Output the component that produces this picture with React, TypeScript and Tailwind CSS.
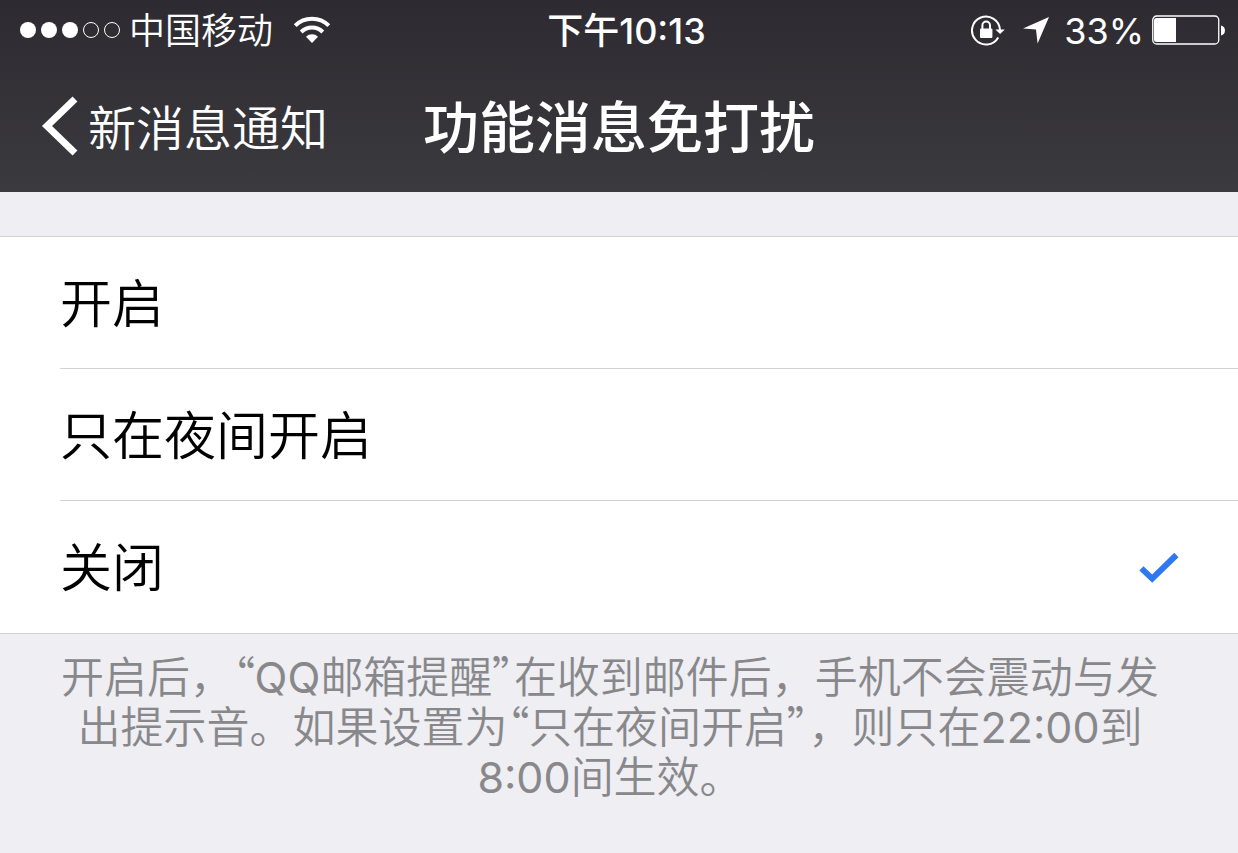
import { useState } from "react";
import type { ReactNode } from "react";

const options = ["开启", "只在夜间开启", "关闭"];

function SignalDots() {
  return (
    <svg width="102" height="18" viewBox="0 0 102 18" role="img" aria-label="信号强度">
      <circle cx="9" cy="9" r="8" fill="#fff" />
      <circle cx="30" cy="9" r="8" fill="#fff" />
      <circle cx="51" cy="9" r="8" fill="#fff" />
      <circle cx="72" cy="9" r="7.5" fill="none" stroke="#fff" />
      <circle cx="93" cy="9" r="7.5" fill="none" stroke="#fff" />
    </svg>
  );
}

function WifiIcon() {
  return (
    <svg width="38" height="28" viewBox="0 0 38 28" fill="none" stroke="#fff" strokeWidth="4" role="img" aria-label="无线网络">
      <path d="M2.2 9.6a24 24 0 0 1 33.6 0" />
      <path d="M8.2 16a15.4 15.4 0 0 1 21.6 0" />
      <path d="M13 20.8a8.6 8.6 0 0 1 12 0L19 27z" fill="#fff" stroke="none" />
    </svg>
  );
}

function RotationLockIcon() {
  return (
    <svg width="36" height="32" viewBox="0 0 36 32" fill="none" role="img" aria-label="方向锁定">
      <path d="M28.2 23.4A14 14 0 1 1 30 16" stroke="#fff" strokeWidth="2" />
      <path d="M25.4 15.4h9.4l-4.7 4.6z" fill="#fff" />
      <rect x="10" y="14.5" width="12.4" height="9.5" rx="1" fill="#fff" />
      <path d="M12.4 15v-3.6a3.8 3.8 0 0 1 7.6 0V15" stroke="#fff" strokeWidth="2" />
    </svg>
  );
}

function LocationIcon() {
  return (
    <svg width="28" height="28" viewBox="0 0 28 28" role="img" aria-label="定位">
      <path d="M27 1 15.6 27.6 14 13.6 1 12.6z" fill="#fff" />
    </svg>
  );
}

function BatteryIcon() {
  return (
    <svg width="74" height="30" viewBox="0 0 74 30" role="img" aria-label="电池">
      <rect x="0.75" y="1" width="66" height="28" rx="4" fill="none" stroke="#fff" strokeWidth="1.3" />
      <path d="M4.5 3H24v24H4.5A2.5 2.5 0 0 1 2 24.5V5.5A2.5 2.5 0 0 1 4.5 3z" fill="#fff" />
      <path d="M69 10.5c5.3 1 5.3 9 0 10z" fill="#fff" />
    </svg>
  );
}

function CheckIcon() {
  return (
    <svg width="40" height="32" viewBox="0 0 40 32" fill="none" aria-hidden="true">
      <path d="M2.4 17.4 13.2 27.6 37.4 4" stroke="#2f79f0" strokeWidth="6" />
    </svg>
  );
}

function Quoted({ children }: { children: ReactNode }) {
  return (
    <>
      <span className="font-['Noto_Sans_CJK_SC',sans-serif] leading-none [font-feature-settings:'palt']">“</span>
      {children}
      <span className="font-['Noto_Sans_CJK_SC',sans-serif] leading-none [font-feature-settings:'palt']">”</span>
    </>
  );
}

function Latin({ children }: { children: ReactNode }) {
  return <span className="font-normal">{children}</span>;
}

export default function App() {
  const [selected, setSelected] = useState("关闭");

  return (
    <div className="min-h-screen bg-[#eeeef3] font-['Inter','Noto_Sans_CJK_SC',sans-serif]" lang="zh-CN">
      <header className="bg-linear-to-b from-[#2d2b31] to-[#3b3a3f] text-white">
        <div className="grid h-[60px] grid-cols-[1fr_auto_1fr] items-center pr-3 pl-[19px] text-[36px] leading-[56px]">
          <div className="flex items-center">
            <SignalDots />
            <span className="ml-2 pt-0.5 font-[350]">中国移动</span>
            <span className="ml-5">
              <WifiIcon />
            </span>
          </div>
          <time className="pt-0.5 pl-2 font-medium">下午10:13</time>
          <div className="flex items-center justify-end">
            <RotationLockIcon />
            <span className="mr-3.5 ml-4">
              <LocationIcon />
            </span>
            <span className="mr-2 pt-0.5 font-normal">33%</span>
            <BatteryIcon />
          </div>
        </div>
        <nav className="grid h-[132px] grid-cols-[1fr_auto_1fr] items-center pl-10">
          <button type="button" className="flex items-center gap-2 justify-self-start text-[48px] font-[350]">
            <svg width="40" height="60" viewBox="0 0 40 60" fill="none" aria-hidden="true">
              <path d="M35 3 7 30 35 57" stroke="#fff" strokeWidth="7" />
            </svg>
            <span className="pt-1.5">新消息通知</span>
          </button>
          <h1 className="pt-1 pr-10 text-[56px] font-medium">功能消息免打扰</h1>
        </nav>
      </header>

      <main>
        <div role="radiogroup" aria-label="功能消息免打扰" className="mt-11 border-y border-[#d2d2d6] bg-white">
          <div className="ml-[60px] divide-y divide-[#d2d2d6]">
            {options.map((option) => (
              <label key={option} className="relative flex h-[132px] cursor-pointer items-center justify-between pr-[59px] text-[52px] text-black">
                <span className="pt-1 font-[350]">{option}</span>
                <input
                  type="radio"
                  name="mute"
                  value={option}
                  checked={selected === option}
                  onChange={() => setSelected(option)}
                  className="sr-only"
                />
                {selected === option && <CheckIcon />}
              </label>
            ))}
          </div>
        </div>
        <p className="pt-[18px] pr-[72px] pb-12 pl-[54px] text-center text-[43px] leading-[50px] font-[350] text-[#88888b]">
          开启后，<Quoted><Latin>QQ</Latin>邮箱提醒</Quoted>在收到邮件后，手机不会震动与发出提示音。如果设置为<Quoted>只在夜间开启</Quoted>，则只在<Latin>22:00</Latin>到<Latin>8:00</Latin>间生效。
        </p>
      </main>
    </div>
  );
}
